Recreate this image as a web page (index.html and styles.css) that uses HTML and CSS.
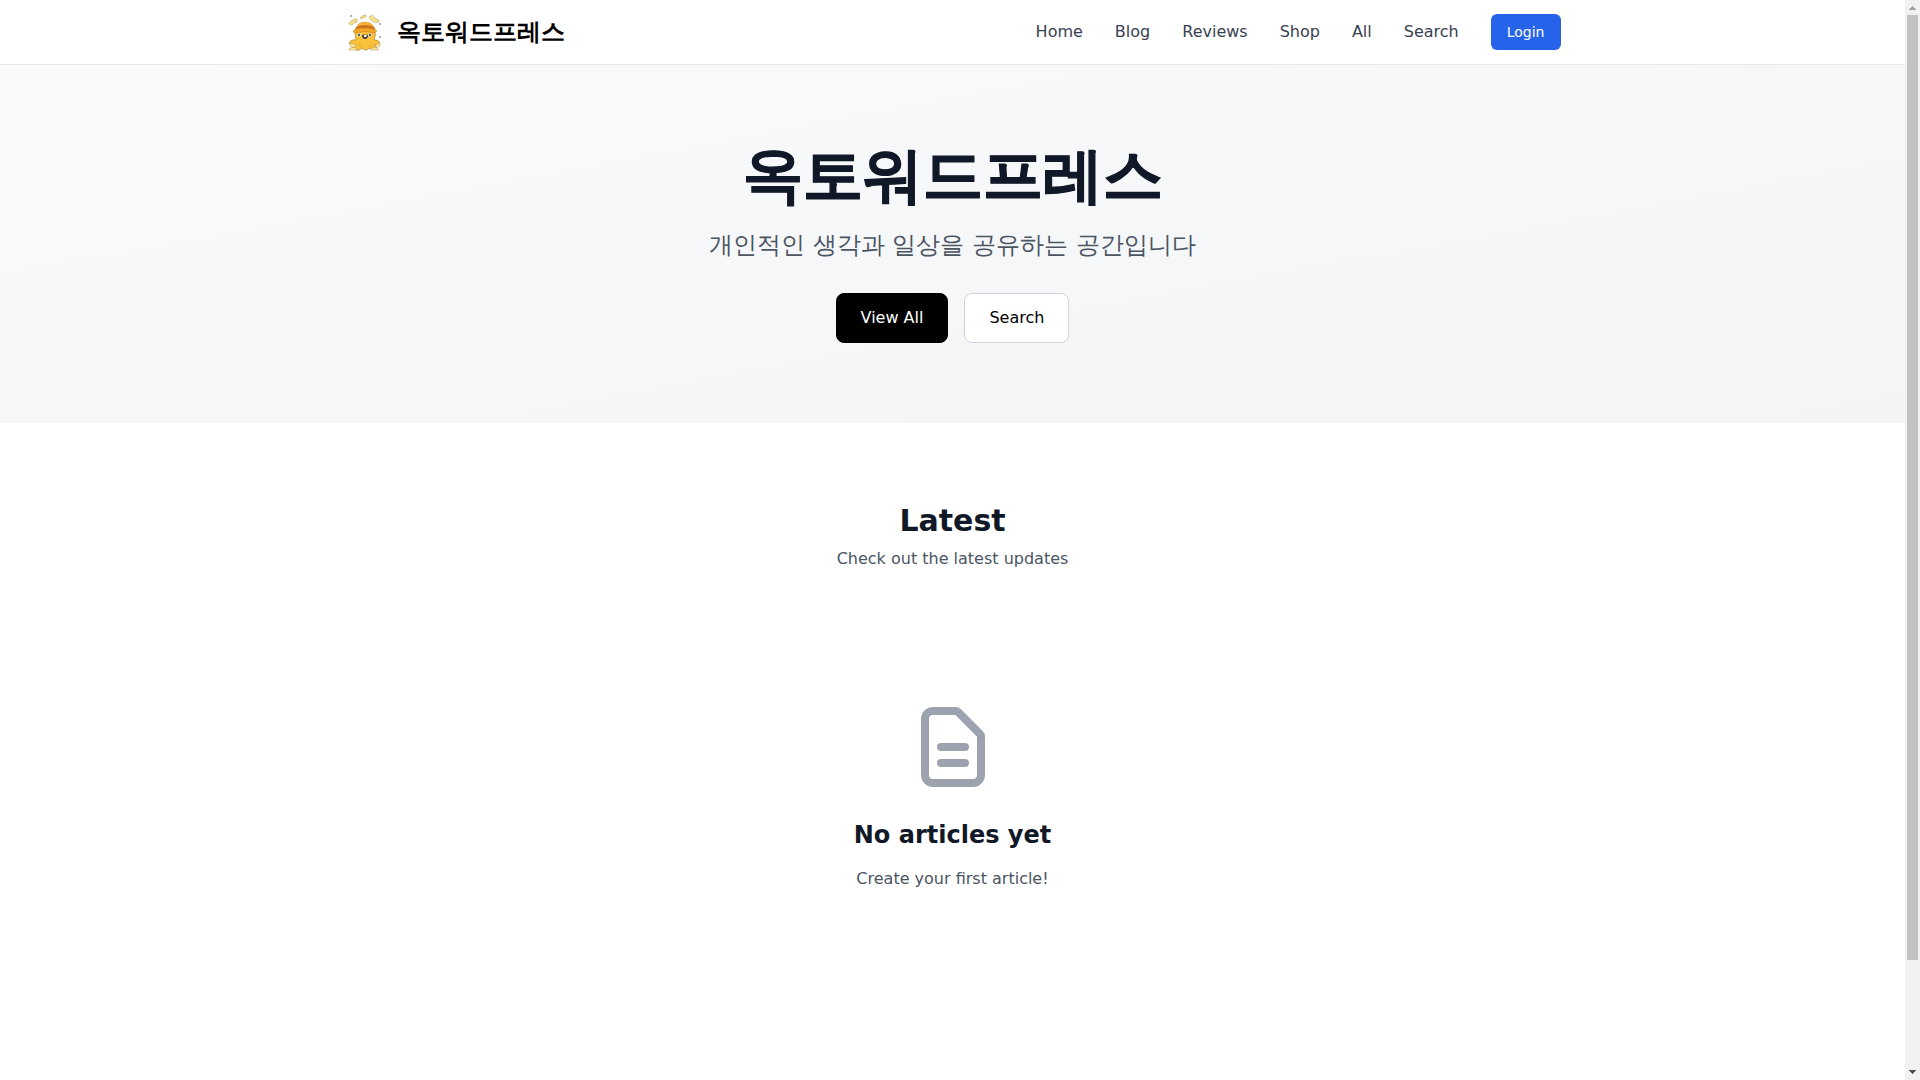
FILE: index.html
```html
<!DOCTYPE html>
<html lang="ko">
<head>
<meta charset="utf-8">
<meta name="viewport" content="width=device-width, initial-scale=1">
<title>옥토워드프레스</title>
<link rel="stylesheet" href="styles.css">
</head>
<body>
<header class="site-header">
  <div class="container header-row">
    <a class="brand" href="#">
      <svg class="brand-logo" viewBox="0 0 40 40" aria-hidden="true">
        <g fill="#f7e08a" stroke="#b39a55" stroke-width=".5">
          <path d="M4 12Q6 7 12 7L12 10Q9 10 7 13z"/>
          <path d="M15 6q2-3 6-3v2q-3 0-4 2z"/>
          <path d="M24 5l3-2q2 4 7 5v2q-7 2-10-5z"/>
        </g>
        <g fill="#999"><circle cx="6" cy="4" r="1"/><circle cx="35" cy="12" r="1"/><circle cx="35" cy="25" r="1"/></g>
        <path d="M10 19Q10 25 11 28Q6 27 4 31Q6 34 9 33Q6 37 11 38Q15 39 17 36Q18 38 21 38Q23 38 24 36Q27 39 31 37Q32 34 29 33Q33 34 35 31Q33 27 29 28Q31 24 30 19Z" fill="#fac23a" stroke="#b58332" stroke-width=".7"/>
        <g fill="#f7e69a" stroke="#a9873d" stroke-width=".4">
          <path d="M5 31l6 2-1 3-5-2zM5 36l5-1 3 3H4zM35 31l-5 2 1 3 4-2zM26 36l5-1 3 3h-8z"/>
        </g>
        <path d="M11 18Q12 10 20 10Q28 10 30 18z" fill="#f6b32b" stroke="#b87320" stroke-width=".4"/>
        <path d="M11 15q9-4 18 0l1 3q-10-4-20 0z" fill="#cf701e"/>
        <path d="M8 19q3-3 12-3t12 3q-1 2-4 2-8-3-16 0-4 0-4-2z" fill="#f3a526" stroke="#b87320" stroke-width=".4"/>
        <circle cx="14" cy="23" r="2" fill="#f2e5b7"/><circle cx="25" cy="23" r="2" fill="#f2e5b7"/>
        <circle cx="14" cy="23" r="1.2" fill="#555"/><circle cx="25" cy="23" r="1.2" fill="#555"/>
        <path d="M17 23q3-1 6 0 0 4-3 4t-3-4z" fill="#413c3a"/><path d="M19 23h3l-1 2h-2z" fill="#fff"/>
        <path d="M13 32l4 3M28 32l-4 3" fill="none" stroke="#d79523" stroke-width=".6"/>
      </svg>
      <span>옥토워드프레스</span>
    </a>
    <nav class="main-nav" aria-label="Main">
      <a href="#">Home</a>
      <a href="#">Blog</a>
      <a href="#">Reviews</a>
      <a href="#">Shop</a>
      <a href="#">All</a>
      <a href="#">Search</a>
      <a class="login" href="#">Login</a>
    </nav>
  </div>
</header>
<main>
  <section class="hero">
    <h1>옥토워드프레스</h1>
    <p>개인적인 생각과 일상을 공유하는 공간입니다</p>
    <div class="actions">
      <a class="button button-primary" href="#">View All</a>
      <a class="button" href="#">Search</a>
    </div>
  </section>
  <section class="container latest">
    <h2>Latest</h2>
    <p>Check out the latest updates</p>
    <div class="empty">
      <svg class="empty-icon" viewBox="0 0 24 24" fill="none" stroke="currentColor" stroke-width="2" stroke-linecap="round" stroke-linejoin="round" aria-hidden="true">
        <path d="M9 12h6m-6 4h6m2 5H7a2 2 0 01-2-2V5a2 2 0 012-2h5.586a1 1 0 01.707.293l5.414 5.414a1 1 0 01.293.707V19a2 2 0 01-2 2z"/>
      </svg>
      <h3>No articles yet</h3>
      <p>Create your first article!</p>
    </div>
  </section>
</main>
<div class="scrollbar" aria-hidden="true">
  <svg class="arrow arrow-up" viewBox="0 0 15 15" shape-rendering="crispEdges"><path d="M7 6h1v1h1v1h1v1h1v1H4V9h1V8h1V7h1z"/></svg>
  <div class="track"><div class="thumb"></div></div>
  <svg class="arrow" viewBox="0 0 15 15" shape-rendering="crispEdges"><path d="M4 5h7v1h-1v1H9v1H8v1H7V8H6V7H5V6H4z"/></svg>
</div>
</body>
</html>
```
FILE: styles.css
```css
* {
  box-sizing: border-box;
}

body,
h1,
h2,
h3,
p {
  margin: 0;
}

body {
  padding-right: 15px;
  background: #fff;
  color: #000;
  font: 16px/24px "DejaVu Sans", sans-serif;
}

a {
  color: inherit;
  text-decoration: none;
}

.container {
  max-width: 1280px;
  margin: 0 auto;
  padding: 0 32px;
}

.site-header {
  border-bottom: 1px solid #e5e7eb;
}

.header-row {
  display: flex;
  align-items: center;
  justify-content: space-between;
  min-height: 64px;
}

.brand {
  display: flex;
  align-items: center;
  gap: 12px;
  font-size: 24px;
  line-height: 32px;
  font-weight: 700;
}

.brand-logo {
  width: 40px;
  height: 40px;
}

.main-nav {
  display: flex;
  align-items: center;
  gap: 32px;
  color: #374151;
}

.login {
  padding: 8px 16px;
  border-radius: 6px;
  background: #2563eb;
  color: #fff;
  font-size: 14px;
  line-height: 20px;
}

.hero {
  padding: 80px 32px;
  background: linear-gradient(to bottom right, #f9fafb, #f3f4f6);
  text-align: center;
}

.hero h1 {
  margin-bottom: 24px;
  color: #111827;
  font-size: 60px;
  line-height: 60px;
  -webkit-text-stroke: 1px #111827;
}

.hero p {
  margin-bottom: 32px;
  color: #4b5563;
  font-size: 24px;
  line-height: 32px;
}

.actions {
  display: flex;
  justify-content: center;
  gap: 16px;
}

.button {
  padding: 12px 24px;
  border: 1px solid #d1d5db;
  border-radius: 8px;
  background: #fff;
}

.button-primary {
  border-color: #000;
  background: #000;
  color: #fff;
}

.latest {
  padding-top: 80px;
  padding-bottom: 80px;
  color: #4b5563;
  text-align: center;
}

.latest h2 {
  margin-bottom: 8px;
  color: #111827;
  font-size: 30px;
  line-height: 36px;
}

.empty {
  margin-top: 64px;
  padding: 64px 0;
}

.empty-icon {
  display: block;
  width: 96px;
  height: 96px;
  margin: 0 auto 24px;
  color: #9ca3af;
}

.empty h3 {
  margin-bottom: 16px;
  color: #111827;
  font-size: 24px;
  line-height: 32px;
}

.scrollbar {
  position: fixed;
  top: 0;
  right: 0;
  bottom: 0;
  display: flex;
  flex-direction: column;
  width: 15px;
  background: #f1f1f1;
}

.arrow {
  width: 15px;
  height: 15px;
  fill: #505050;
}

.arrow-up {
  fill: #a3a3a3;
}

.track {
  flex: 1;
  padding: 0 2px;
}

.thumb {
  height: 90%;
  background: #c1c1c1;
}
```
